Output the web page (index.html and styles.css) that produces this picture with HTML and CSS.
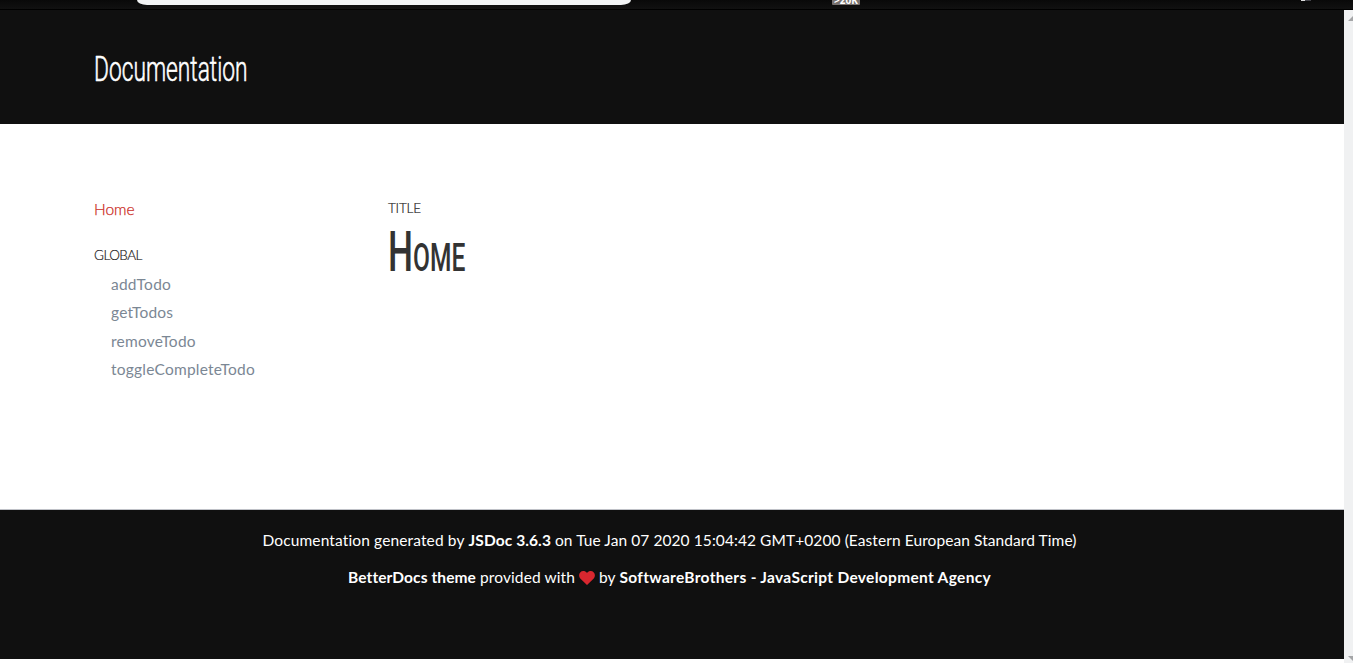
FILE: index.html
```html
<!DOCTYPE html>
<html lang="en">
<head>
<meta charset="utf-8">
<title>Documentation</title>
<link rel="stylesheet" href="styles.css">
</head>
<body>
<div class="toolbar"><span class="address"></span><span class="badge">&gt;20K</span><span class="notch"></span></div>
<div class="viewport">
  <div class="page">
    <header class="header"><span class="brand">Documentation</span></header>
    <main class="main">
      <nav class="side">
        <a class="home">Home</a>
        <h3 class="label group">GLOBAL</h3>
        <ul class="links">
          <li>addTodo</li>
          <li>getTodos</li>
          <li>removeTodo</li>
          <li>toggleCompleteTodo</li>
        </ul>
      </nav>
      <section class="content">
        <p class="label kind">TITLE</p>
        <h1 class="title">H<span class="small">OME</span></h1>
      </section>
    </main>
    <footer class="footer">
      <p class="line"><span class="f1">Documentation generated by</span> <b class="f2">JSDoc 3.6.3</b> <span class="f3">on Tue Jan 07 2020 15:04:42 GMT+0200 (Eastern European Standard Time)</span></p>
      <p class="line"><b class="f4">BetterDocs theme</b> <span class="f5">provided with</span> <svg class="heart" viewBox="0 0 16 14"><path d="M8 14L1.500 7.700C-.3 5.900-.3 3 1.200 1.400C3-.4 6-.4 8 2C10-.4 13-.4 14.800 1.400C16.300 3 16.300 5.900 14.500 7.700Z"/></svg> <span class="f6">by</span> <b class="f7">SoftwareBrothers - JavaScript Development Agency</b></p>
    </footer>
  </div>
  <div class="scrollbar"><i class="up"></i><i class="down"></i></div>
</div>
</body>
</html>
```
FILE: styles.css
```css
* { box-sizing: border-box; }
body { margin: 0; width: 1353px; height: 663px; overflow: hidden; background: #fff; font: 15.5px/20px Lato, "Open Sans", sans-serif; font-variant-ligatures: none; }
p, h1, h3, ul { margin: 0; padding: 0; font-weight: 400; }
.toolbar { display: flex; height: 10px; background: linear-gradient(#090909, #111); border-bottom: 1px solid #000; overflow: hidden; }
.address { width: 494px; height: 5px; margin-left: 137px; background: #f1f3f4; border-radius: 0 0 10px 10px / 0 0 5px 5px; }
.badge { width: 28px; height: 5px; margin-left: 201px; background: #77716f; border-radius: 0 0 1px 1px; color: #fff; font: bold 10px/0 "Open Sans", sans-serif; text-align: center; }
.notch { width: 10px; height: 1px; margin-left: 441px; background: linear-gradient(90deg, #ddd 35%, #45454b 35%); }
.viewport { display: flex; height: 653px; }
.page { width: 1344px; background: #fff; }
.header { height: 114px; padding: 39px 94px 0; background: #101010; color: #fff; }
.brand { display: inline-block; font: 300 35px/41px Roboto, sans-serif; transform: scaleX(.65); transform-origin: left; -webkit-text-stroke: .6px #fff; }
.main { display: flex; height: 385px; padding: 75px 94px 0; }
.side { width: 294px; }
.home { display: block; color: #cb2a1d; font-weight: 300; -webkit-text-stroke: .25px #cb2a1d; }
.label { font-size: 13.5px; line-height: 18px; color: #222; font-weight: 300; letter-spacing: -.5px; -webkit-text-stroke: .2px #222; }
.group { margin-top: 27px; }
.kind { letter-spacing: -.2px; }
.links { list-style: none; padding: 10px 0 0 17px; color: #7b8794; letter-spacing: .23px; }
.links li { height: 28.4px; }
.title { font: 500 56px/66px Roboto, sans-serif; color: #333; transform: scaleX(.63); transform-origin: left; margin-top: 2px; width: 200px; white-space: nowrap; }
.small { font-size: 39px; }
.footer { height: 150px; padding: 20px 5px 0 0; background: #101010; border-top: 1px solid #bfc1c7; color: #fff; }
.line { display: flex; justify-content: center; gap: 4px; white-space: nowrap; height: 37px; }
.f1 { letter-spacing: .13px; }
.f3 { letter-spacing: .08px; }
.f5 { letter-spacing: .11px; }
.f2, .f4 { letter-spacing: .1px; }
.f7 { letter-spacing: .31px; }
.heart { width: 16px; height: 14px; margin-top: 4px; fill: #d8272f; }
.scrollbar { width: 9px; height: 653px; background: #f0f1f2; position: relative; }
.up, .down { position: absolute; left: 4px; border: 5px solid transparent; }
.up { top: 6px; border-top: 0; border-bottom-color: #a4a5a7; }
.down { top: 646px; border-bottom: 0; border-top-color: #a4a5a7; }
```
